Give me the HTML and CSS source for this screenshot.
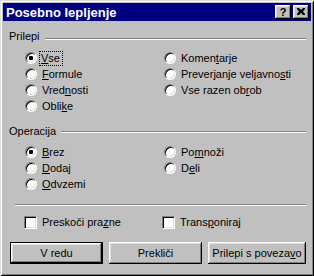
FILE: index.html
```html
<!DOCTYPE html>
<html>
<head>
<meta charset="utf-8">
<link rel="stylesheet" href="styles.css">
</head>
<body>
<div class="window">
  <div class="titlebar">
    <span class="title">Posebno lepljenje</span>
    <span class="tbtns">
      <span class="tbtn help">?</span>
      <span class="tbtn close"><svg width="8" height="7" viewBox="0 0 8 7"><path d="M0 0h2l2 2 2-2h2v1l-2 2.5 2 2.5v1h-2l-2-2-2 2h-2v-1l2-2.5-2-2.5z" fill="#000"/></svg></span>
    </span>
  </div>
  <div class="body">
    <div class="ghead g1"><span class="glabel">Prilepi</span><span class="gline"></span></div>
    <div class="opts opts1">
      <label class="opt"><span class="radio on"></span><span class="txt focus"><u>V</u>se</span></label>
      <label class="opt"><span class="radio"></span><span class="txt">Komen<u>t</u>arje</span></label>
      <label class="opt"><span class="radio"></span><span class="txt"><u>F</u>ormule</span></label>
      <label class="opt"><span class="radio"></span><span class="txt">Preverjanje veljavno<u>s</u>ti</span></label>
      <label class="opt"><span class="radio"></span><span class="txt">Vred<u>n</u>osti</span></label>
      <label class="opt"><span class="radio"></span><span class="txt">Vse razen ob<u>r</u>ob</span></label>
      <label class="opt"><span class="radio"></span><span class="txt">Obli<u>k</u>e</span></label>
    </div>
    <div class="ghead g2"><span class="glabel">Operacija</span><span class="gline"></span></div>
    <div class="opts opts2">
      <label class="opt"><span class="radio on"></span><span class="txt"><u>B</u>rez</span></label>
      <label class="opt"><span class="radio"></span><span class="txt">Po<u>m</u>noži</span></label>
      <label class="opt"><span class="radio"></span><span class="txt"><u>D</u>odaj</span></label>
      <label class="opt"><span class="radio"></span><span class="txt">D<u>e</u>li</span></label>
      <label class="opt"><span class="radio"></span><span class="txt"><u>O</u>dvzemi</span></label>
    </div>
    <div class="sep"></div>
    <div class="checks">
      <label class="opt"><span class="check"></span><span class="txt">Preskoči pra<u>z</u>ne</span></label>
      <label class="opt"><span class="check"></span><span class="txt">Trans<u>p</u>oniraj</span></label>
    </div>
    <div class="buttons">
      <button class="btn default">V redu</button>
      <button class="btn">Prekliči</button>
      <button class="btn wide">Prilepi s poveza<u>v</u>o</button>
    </div>
  </div>
</div>
</body>
</html>
```
FILE: styles.css
```css
* { box-sizing: border-box; }
html, body { margin: 0; padding: 0; background: #c0c0c0; }
body {
  font-family: "Liberation Sans", Arial, sans-serif;
  font-size: 11px;
  color: #000;
}
.window {
  width: 314px;
  height: 276px;
  padding: 3px;
  background: #c0c0c0;
  box-shadow: inset 1px 1px 0 #dfdfdf, inset -1px -1px 0 #000,
              inset 2px 2px 0 #fff, inset -2px -2px 0 #808080;
}
.titlebar {
  height: 18px;
  background: #000080;
  display: flex;
  align-items: center;
  justify-content: space-between;
  padding: 0 2px 0 3px;
}
.title {
  color: #fff;
  font-weight: bold;
  font-size: 13px;
}
.tbtns { display: flex; gap: 2px; }
.tbtn {
  width: 16px;
  height: 14px;
  background: #c0c0c0;
  display: flex;
  align-items: center;
  justify-content: center;
  box-shadow: inset -1px -1px 0 #000, inset 1px 1px 0 #fff,
              inset -2px -2px 0 #808080, inset 2px 2px 0 #dfdfdf;
  font-weight: bold;
  font-size: 11px;
  line-height: 14px;
}
.help { padding-bottom: 1px; }
.close svg { display: block; margin-top: -1px; }
.body { padding: 9px 5px 0 6px; }
.ghead { display: flex; height: 13px; line-height: 13px; }
.glabel { padding-right: 5px; }
.gline {
  flex: 1;
  height: 2px;
  border-top: 1px solid #808080;
  border-bottom: 1px solid #fff;
}
.g1 .gline { margin-top: 8px; }
.g2 { margin-top: 11px; }
.g2 .gline { margin-top: 6px; }
.opts {
  display: grid;
  grid-template-columns: 139px 1fr;
  grid-auto-rows: 16px;
  padding-left: 16px;
}
.opts1 { margin-top: 7px; }
.opts2 { margin-top: 6px; }
.opt { display: flex; align-items: center; line-height: 13px; }
.radio {
  width: 12px;
  height: 12px;
  border-radius: 50%;
  background: #fff;
  border: 1px solid;
  border-color: #808080 #fff #fff #808080;
  box-shadow: inset 1px 1px 0 #000, inset -1px -1px 0 #dfdfdf;
  margin-right: 4px;
  flex: none;
  display: flex;
  align-items: center;
  justify-content: center;
}
.radio.on::after {
  content: "";
  width: 4px;
  height: 4px;
  background: #000;
  border-radius: 1px;
}
.txt { padding: 0 1px; }
.txt.focus { outline: 1px dotted #000; outline-offset: 0; padding: 0 2px 0 1px; margin-left: -1px; }
u { text-decoration: underline; text-underline-offset: 1px; }
.sep {
  margin: 12px 0 0 6px;
  height: 2px;
  border-top: 1px solid #808080;
  border-bottom: 1px solid #fff;
}
.checks {
  margin-top: 8px;
  display: grid;
  grid-template-columns: 138px 1fr;
  grid-auto-rows: 16px;
  padding-left: 15px;
}
.check {
  width: 13px;
  height: 13px;
  background: #fff;
  border: 1px solid;
  border-color: #808080 #fff #fff #808080;
  box-shadow: inset 1px 1px 0 #000, inset -1px -1px 0 #dfdfdf;
  margin-right: 4px;
  flex: none;
}
.buttons {
  display: flex;
  margin-top: 12px;
  padding-left: 1px;
  gap: 6px;
}
.btn {
  font: inherit;
  color: #000;
  width: 93px;
  height: 22px;
  padding: 0;
  border: none;
  background: #c0c0c0;
  box-shadow: inset -1px -1px 0 #000, inset 1px 1px 0 #fff,
              inset -2px -2px 0 #808080, inset 2px 2px 0 #dfdfdf;
}
.btn.wide { width: 98px; }
.btn.default {
  box-shadow: inset 0 0 0 1px #000, inset -2px -2px 0 #000, inset 2px 2px 0 #fff,
              inset -3px -3px 0 #808080, inset 3px 3px 0 #dfdfdf;
}
```
